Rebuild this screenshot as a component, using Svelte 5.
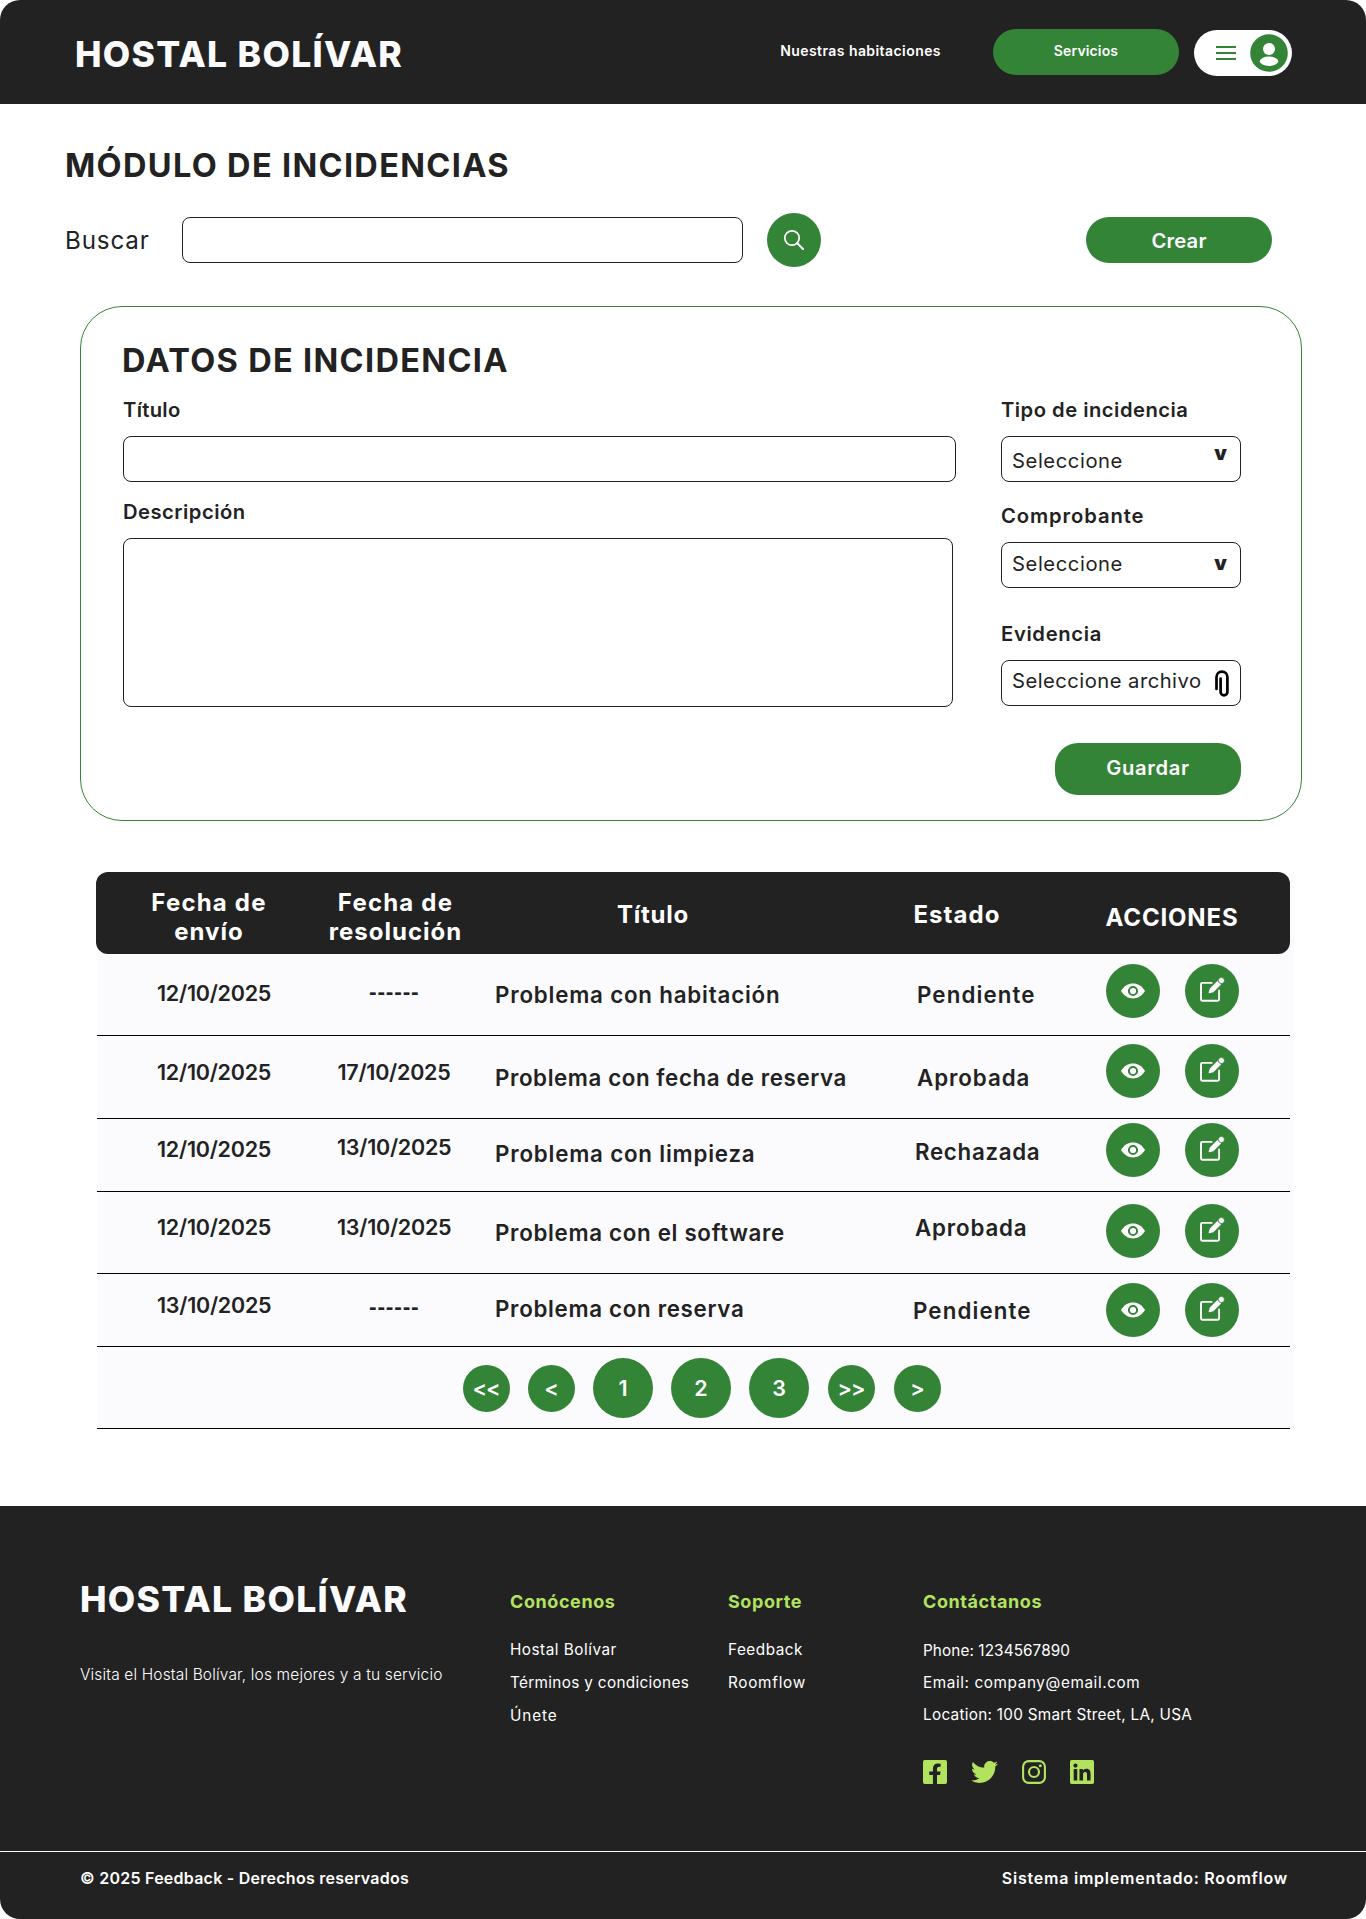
<script>
  const rows = [
    { sent: '12/10/2025', solved: null, title: 'Problema con habitación', state: 'Pendiente' },
    { sent: '12/10/2025', solved: '17/10/2025', title: 'Problema con fecha de reserva', state: 'Aprobada' },
    { sent: '12/10/2025', solved: '13/10/2025', title: 'Problema con limpieza', state: 'Rechazada' },
    { sent: '12/10/2025', solved: '13/10/2025', title: 'Problema con el software', state: 'Aprobada' },
    { sent: '13/10/2025', solved: null, title: 'Problema con reserva', state: 'Pendiente' }
  ];
  const pages = ['<<', '<', '1', '2', '3', '>>', '>'];
</script>

<div class="page">
  <header>
    <span class="logo">HOSTAL BOLÍVAR</span>
    <nav>
      <a class="rooms" href="#rooms">Nuestras habitaciones</a>
      <a class="services" href="#services">Servicios</a>
      <button class="account" aria-label="Menú de usuario">
        <svg class="burger" width="20" height="14" viewBox="0 0 20 14"><path d="M0 1h20M0 7h20M0 13h20" stroke="#338436" stroke-width="1.8" /></svg>
        <svg width="38" height="38" viewBox="0 0 38 38">
          <circle cx="19" cy="19" r="18.8" fill="#338436" />
          <circle cx="19" cy="15" r="6" fill="#fff" />
          <ellipse cx="19" cy="27.3" rx="9.2" ry="4.7" fill="#fff" />
        </svg>
      </button>
    </nav>
  </header>

  <main>
    <h1>MÓDULO DE INCIDENCIAS</h1>
    <div class="search-row">
      <label for="q">Buscar</label>
      <input id="q" class="box query" />
      <button class="round" aria-label="Buscar incidencias">
        <svg width="22" height="22" viewBox="0 0 22 22" fill="none" stroke="#fff" stroke-linecap="round"><circle cx="9" cy="9" r="7.2" stroke-width="1.7" /><path d="M14.3 14.3L20 20" stroke-width="2" /></svg>
      </button>
      <button class="btn create">Crear</button>
    </div>

    <section class="card">
      <h2>DATOS DE INCIDENCIA</h2>
      <div class="form">
        <div class="col">
          <label class="t-titulo" for="titulo">Título</label>
          <input id="titulo" class="box" />
          <label class="t-desc" for="desc">Descripción</label>
          <textarea id="desc" class="box"></textarea>
        </div>
        <div class="col">
          <span class="lbl t-tipo">Tipo de incidencia</span>
          <div class="box pick first"><span>Seleccione</span><b>v</b></div>
          <span class="lbl t-comp">Comprobante</span>
          <div class="box pick second"><span>Seleccione</span><b>v</b></div>
          <span class="lbl t-evid">Evidencia</span>
          <div class="box pick file">
            <span>Seleccione archivo</span>
            <svg width="14" height="27" viewBox="0 0 14 27" fill="none" stroke="#000" stroke-width="2.7" stroke-linecap="round"><path d="M1.5 19V7a5.4 5.400 0 0 1 10.900 0v15a3.400 3.400 0 0 1-6.800 0V8.500" /></svg>
          </div>
          <button class="btn save">Guardar</button>
        </div>
      </div>
    </section>

    <section class="table">
      <div class="thead">
        <span>Fecha de<br /><i>envío</i></span>
        <span>Fecha de<br /><i>resolución</i></span>
        <span class="mid">Título</span>
        <span class="mid est">Estado</span>
        <span class="acc">ACCIONES</span>
      </div>
      {#each rows as row, i}
        <div class="row r{i + 1}">
          <span class="date sent">{row.sent}</span>
          {#if row.solved}
            <span class="date solved">{row.solved}</span>
          {:else}
            <span class="date solved none">------</span>
          {/if}
          <span class="title">{row.title}</span>
          <span class="state">{row.state}</span>
          <div class="actions">
            <button class="round" aria-label="Ver">
              <svg width="24" height="16" viewBox="0 0 24 16"><path d="M0 8C3.2 3 7.3.6 12 .6S20.800 3 24 8c-3.200 5-7.300 7.400-12 7.400S3.200 13 0 8z" fill="#fff" /><circle cx="12" cy="8" r="4.100" fill="none" stroke="#338436" stroke-width="2" /></svg>
            </button>
            <button class="round" aria-label="Editar">
              <svg class="edit" width="26" height="26" viewBox="0 0 26 26" fill="none"><path d="M12.600 5.900H3.200a1.200 1.200 0 0 0-1.200 1.200v15.500a1.200 1.200 0 0 0 1.200 1.200h15.700a1.200 1.200 0 0 0 1.200-1.200V13.500" stroke="#fff" stroke-width="1.900" stroke-linecap="round" /><path d="M10 15.900l1.200-4.300 7.300-7.300 3.300 3.200-7.400 7.300z" fill="#fff" stroke="#fff" stroke-width=".8" stroke-linejoin="round" /><circle cx="22.400" cy="3.500" r="3" fill="#fff" stroke="#338436" stroke-width=".7" /></svg>
            </button>
          </div>
        </div>
      {/each}
      <div class="pager">
        {#each pages as p}
          <button class:num={p >= '0' && p <= '9'}>{p}</button>
        {/each}
      </div>
    </section>
  </main>

  <footer>
    <div class="cols">
      <div class="brand">
        <span class="logo">HOSTAL BOLÍVAR</span>
        <p>Visita el Hostal Bolívar, los mejores y a tu servicio</p>
      </div>
      <div class="links">
        <h3>Conócenos</h3>
        <a href="#hostal">Hostal Bolívar</a>
        <a class="terms" href="#terms">Términos y condiciones</a>
        <a class="join" href="#join">Únete</a>
      </div>
      <div class="links">
        <h3>Soporte</h3>
        <a href="#feedback">Feedback</a>
        <a class="flow" href="#roomflow">Roomflow</a>
      </div>
      <div class="links contact">
        <h3>Contáctanos</h3>
        <span class="phone">Phone: 1234567890</span>
        <span class="mail">Email: company@email.com</span>
        <span class="loc">Location: 100 Smart Street, LA, USA</span>
        <div class="social">
          <svg width="24" height="24" viewBox="0 32 448 448"><path d="M416 32H32A32 32 0 0 0 0 64v384a32 32 0 0 0 32 32h153.250V314h-68V247h68v-54.640c0-62.150 37-96.480 93.670-96.480 27.140 0 50.520 4.840 50.520 4.840v58h-28c-30.810 0-40.420 19.120-40.420 38.730V247h68l-11 67h-57V480H416a32 32 0 0 0 32-32V64a32 32 0 0 0-32-32z" /></svg>
          <svg class="tw" width="27" height="22" viewBox="0 2 16 13"><path d="M5.026 15c6.038 0 9.341-5.003 9.341-9.334 0-.14 0-.282-.006-.422A6.685 6.685 0 0 0 16 3.542a6.658 6.658 0 0 1-1.889.518 3.301 3.301 0 0 0 1.447-1.817 6.533 6.533 0 0 1-2.087.793A3.286 3.286 0 0 0 7.875 6.030a9.325 9.325 0 0 1-6.767-3.429 3.289 3.289 0 0 0 1.018 4.382A3.323 3.323 0 0 1 .64 6.575v.045a3.288 3.288 0 0 0 2.632 3.218 3.203 3.203 0 0 1-.865.115 3.230 3.230 0 0 1-.614-.057 3.283 3.283 0 0 0 3.067 2.277A6.588 6.588 0 0 1 .78 13.580a6.320 6.320 0 0 1-.78-.045A9.344 9.344 0 0 0 5.026 15z" /></svg>
          <svg class="ig" width="24" height="24" viewBox="0 0 24 24"><rect x="1.100" y="1.100" width="21.800" height="21.800" rx="5.600" fill="none" stroke="#b2e35f" stroke-width="2.100" /><circle cx="12" cy="12" r="5" fill="none" stroke="#b2e35f" stroke-width="2.200" /><circle cx="18.300" cy="5.700" r="1.500" /></svg>
          <svg class="li" width="24" height="24" viewBox="0 32 448 448"><path d="M416 32H31.900C14.300 32 0 46.500 0 64.300v383.400C0 465.500 14.300 480 31.900 480H416c17.600 0 32-14.500 32-32.300V64.300c0-17.800-14.400-32.300-32-32.300zM135.400 416H69V202.200h66.500V416zm-33.200-243c-21.300 0-38.500-17.300-38.500-38.500S80.900 96 102.200 96c21.200 0 38.500 17.300 38.500 38.500 0 21.300-17.200 38.500-38.500 38.500zm282.100 243h-66.400V312c0-24.800-.5-56.700-34.500-56.700-34.600 0-39.900 27-39.900 54.900V416h-66.400V202.200h63.700v29.200h.9c8.900-16.800 30.600-34.500 62.900-34.500 67.200 0 79.700 44.300 79.700 101.900V416z" /></svg>
        </div>
      </div>
    </div>
    <div class="legal">
      <span>© 2025 Feedback - Derechos reservados</span>
      <span class="sys">Sistema implementado: Roomflow</span>
    </div>
  </footer>
</div>

<style>
  :global(body) { margin: 0; background: #fff; }
  .page { width: 1366px; height: 1919px; display: flex; flex-direction: column; box-sizing: border-box; font-family: Inter, "Liberation Sans", sans-serif; color: #222; background: #fff; }
  .page * { box-sizing: border-box; }
  a { color: inherit; text-decoration: none; }
  button, input, textarea { font: inherit; color: inherit; border: 0; margin: 0; padding: 0; background: none; }
  h1, h2, h3, p { margin: 0; }
  svg { display: block; }

  header { height: 104px; flex: none; display: flex; align-items: center; justify-content: space-between; padding: 0 74px 0 75px; background: #222; border-radius: 20px 20px 0 0; color: #fff; }
  .logo { font-size: 35.5px; font-weight: 800; line-height: 40px; letter-spacing: 1.3px; color: #fbfbfe; white-space: nowrap; }
  header .logo { margin-top: 5px; }
  nav { display: flex; align-items: center; font-size: 14px; font-weight: 600; line-height: 20px; }
  .rooms { letter-spacing: 0.43px; margin: -2px 52px 0 0; }
  .services { width: 186px; height: 46px; border-radius: 23px; background: #338436; text-align: center; line-height: 44px; letter-spacing: 0.14px; margin-right: 15px; }
  .account { width: 98px; height: 46px; border-radius: 23px; background: #fff; display: flex; align-items: center; margin-top: 2px; padding-left: 22px; gap: 14px; }

  h1, h2 { font-size: 32.5px; font-weight: 700; line-height: 40px; white-space: nowrap; }
  h1 { margin: 42px 0 0 65px; letter-spacing: 1.33px; }
  .search-row { display: flex; align-items: center; height: 54px; margin-top: 27px; padding: 0 94px 0 65px; }
  .search-row label { width: 117px; font-size: 24.2px; font-weight: 400; letter-spacing: 0.85px; line-height: 30px; padding-top: 1px; }
  .box { display: block; border: 1px solid #222; border-radius: 8px; height: 46px; width: 100%; background: #fff; }
  .search-row .query { width: 561px; margin-right: 24px; }
  .round { width: 54px; height: 54px; border-radius: 50%; background: #338436; display: flex; align-items: center; justify-content: center; }
  .btn { width: 186px; background: #338436; color: #fff; border-radius: 23px; font-size: 20.2px; font-weight: 600; text-align: center; }
  .create { margin-left: auto; height: 46px; letter-spacing: 0.2px; padding-top: 1px; }

  .card { margin: 39px 64px 0 80px; height: 515px; border: 1px solid #338436; border-radius: 42px; padding: 34px 60px 0 42px; }
  h2 { letter-spacing: 1.33px; margin-left: -1px; }
  .form { display: grid; grid-template-columns: 1fr 240px; column-gap: 45px; margin-top: 17px; }
  .col label, .lbl { display: block; font-size: 20.2px; font-weight: 600; line-height: 24px; margin-bottom: 14px; white-space: nowrap; }
  .col .t-titulo { letter-spacing: 0.3px; }
  .col .t-desc { letter-spacing: 0.5px; margin-top: 18px; }
  textarea.box { width: 830px; height: 169px; resize: none; }
  .t-tipo { letter-spacing: 0.5px; }
  .t-comp { letter-spacing: 0.9px; margin-top: 22px; }
  .t-evid { letter-spacing: 0.67px; margin-top: 34px; }
  .pick { display: flex; justify-content: space-between; align-items: flex-start; padding: 0 13px 0 10px; font-size: 20.2px; font-weight: 400; line-height: 24px; letter-spacing: 0.58px; white-space: nowrap; }
  .pick b { font-size: 20px; font-weight: 900; letter-spacing: 0; }
  .first span { margin-top: 12px; }
  .first b { margin-top: 4px; }
  .second span { margin-top: 9px; }
  .second b { margin-top: 8px; }
  .file { letter-spacing: 0.48px; padding-right: 11px; }
  .file span { margin-top: 8px; }
  .file svg { margin-top: 9px; }
  .save { display: block; height: 52px; margin: 37px 0 0 auto; padding-bottom: 4px; letter-spacing: 0.65px; }

  .table { margin: 51px 72px 0 97px; padding-right: 4px; background: #fbfbfe; }
  .thead { height: 82px; margin-left: -1px; background: #222; border-radius: 12px; color: #fff; display: grid; grid-template-columns: 226px 147px 368px 239px 192px; font-size: 24px; font-weight: 700; line-height: 29px; letter-spacing: 1.2px; text-align: center; white-space: nowrap; }
  .thead i { font-style: normal; letter-spacing: 1px; }
  .thead span { padding-top: 16px; }
  .thead .mid { padding-top: 28px; letter-spacing: 0.72px; }
  .thead .est { letter-spacing: 1.05px; padding-left: 1px; }
  .thead .acc { padding-top: 31px; letter-spacing: 0.83px; }
  .row { display: grid; grid-template-columns: 180px 158px 422px 189px 134px; align-items: start; padding-left: 60px; height: 82px; border-bottom: 1px solid #000; font-size: 22.3px; font-weight: 600; line-height: 26px; white-space: nowrap; }
  .date { font-size: 21.5px; letter-spacing: -0.25px; }
  .sent { padding-top: var(--sent); }
  .solved { width: 114px; text-align: center; padding-top: var(--solved); }
  .none { font-family: "Open Sans", sans-serif; font-size: 22px; font-weight: 700; letter-spacing: 1.3px; padding-left: 1px; }
  .title { padding-top: var(--title); letter-spacing: 0.7px; }
  .state { padding-top: var(--state); letter-spacing: 0.95px; }
  .actions { display: flex; gap: 25px; padding-top: var(--act); }
  .r1 { --sent: 26px; --solved: 23px; --title: 28px; --state: 28px; --act: 10px; }
  .r2 { --sent: 23px; --solved: 23px; --title: 29px; --state: 29px; --act: 8px; height: 83px; }
  .r3 { --sent: 17px; --solved: 15px; --title: 22px; --state: 20px; --act: 4px; height: 73px; }
  .r4 { --sent: 22px; --solved: 22px; --title: 28px; --state: 23px; --act: 12px; }
  .r5 { --sent: 18px; --solved: 18px; --title: 22px; --state: 24px; --act: 9px; height: 73px; }
  .r1 .title, .r3 .title { letter-spacing: 0.82px; }
  .r2 .title { letter-spacing: 0.6px; }
  .r1 .state, .r5 .state { letter-spacing: 1.12px; }
  .r3 .state, .r4 .state { margin-left: -2px; }
  .r3 .state { letter-spacing: 0.7px; }
  .r4 .state { letter-spacing: 0.85px; }
  .r5 .state { margin-left: -4px; }
  .edit { margin-top: -2px; }
  .pager { height: 82px; border-bottom: 1px solid #000; display: flex; align-items: center; gap: 18px; padding: 1px 0 0 366px; font-size: 21.5px; font-weight: 600; color: #fff; }
  .pager button { width: 47px; height: 47px; border-radius: 50%; background: #338436; letter-spacing: -1px; padding-right: 1px; }
  .pager .num { width: 60px; height: 60px; letter-spacing: 0; padding-right: 0; }
  .pager .num ~ button:not(.num) { margin-left: 1px; }

  footer { margin-top: 77px; height: 413px; background: #222; border-radius: 0 0 20px 20px; color: #fff; }
  .cols { height: 345px; display: grid; grid-template-columns: 430px 218px 195px 1fr; padding-left: 80px; }
  .brand { padding-top: 74px; }
  .brand .logo { display: block; }
  .brand p { margin-top: 45px; font-size: 15.5px; font-weight: 300; line-height: 20px; letter-spacing: 0.15px; white-space: nowrap; }
  .links { padding-top: 84px; font-size: 15.3px; font-weight: 400; line-height: 33px; letter-spacing: 0.5px; white-space: nowrap; }
  .links a, .links span { display: block; }
  h3 { font-size: 18px; font-weight: 700; line-height: 24px; letter-spacing: 0.58px; color: #b2e35f; margin-bottom: 19px; }
  .links .terms { letter-spacing: 0.33px; }
  .links .join { letter-spacing: 0.9px; }
  .links .flow { letter-spacing: 0.72px; }
  .contact { line-height: 32px; }
  .contact h3 { margin-bottom: 21px; }
  .phone { letter-spacing: 0.1px; }
  .mail { letter-spacing: 0.6px; }
  .loc { letter-spacing: 0.28px; }
  .social { display: flex; align-items: center; margin-top: 29px; fill: #b2e35f; }
  .tw { margin-left: 24px; }
  .ig { margin-left: 24px; }
  .li { margin-left: 24px; }
  .legal { height: 68px; border-top: 1px solid #fbfbfe; display: flex; justify-content: space-between; padding: 16px 78px 0 80px; font-size: 16px; font-weight: 600; line-height: 20px; letter-spacing: 0.25px; }
  .sys { letter-spacing: 0.77px; }
</style>
